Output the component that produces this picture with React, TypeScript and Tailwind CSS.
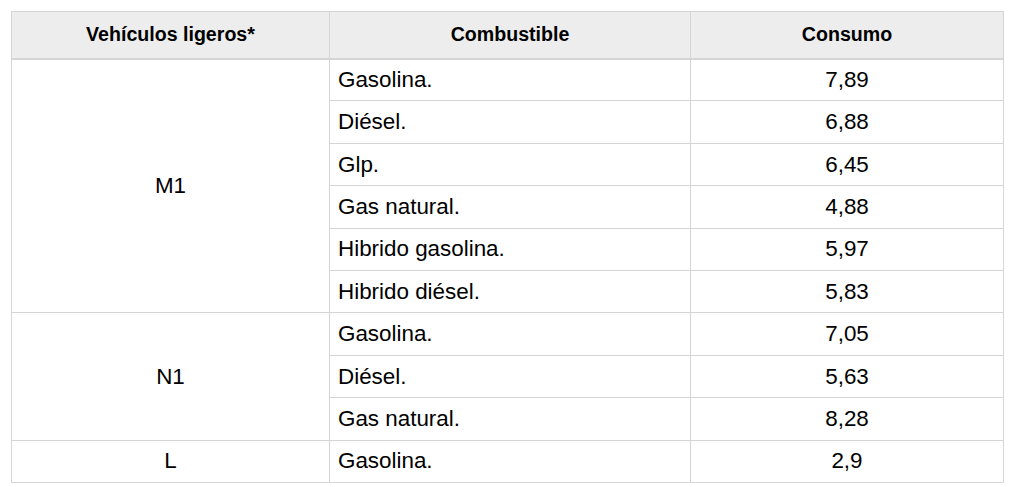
import React from 'react';

type Row = { fuel: string; value: string };
type Group = { category: string; rows: Row[] };

const groups: Group[] = [
  {
    category: 'M1',
    rows: [
      { fuel: 'Gasolina.', value: '7,89' },
      { fuel: 'Diésel.', value: '6,88' },
      { fuel: 'Glp.', value: '6,45' },
      { fuel: 'Gas natural.', value: '4,88' },
      { fuel: 'Hibrido gasolina.', value: '5,97' },
      { fuel: 'Hibrido diésel.', value: '5,83' },
    ],
  },
  {
    category: 'N1',
    rows: [
      { fuel: 'Gasolina.', value: '7,05' },
      { fuel: 'Diésel.', value: '5,63' },
      { fuel: 'Gas natural.', value: '8,28' },
    ],
  },
  {
    category: 'L',
    rows: [{ fuel: 'Gasolina.', value: '2,9' }],
  },
];

const cell = 'border border-[#d5d5d5] h-[42.4px] p-0 align-middle';

export default function App() {
  return (
    <div className="bg-white w-[1009px] h-[487px] pt-[11px] pl-[11px] font-['Liberation_Sans',Arial,sans-serif] text-black">
      <table className="table-fixed border-collapse w-[992px]">
        <colgroup>
          <col className="w-[318px]" />
          <col className="w-[361px]" />
          <col className="w-[313px]" />
        </colgroup>
        <thead>
          <tr className="bg-[#ededed]">
            {['Vehículos ligeros*', 'Combustible', 'Consumo'].map((h) => (
              <th
                key={h}
                className="border border-b-2 border-[#d5d5d5] h-[47px] p-0 text-center align-middle font-bold text-[19.6px]"
              >
                {h}
              </th>
            ))}
          </tr>
        </thead>
        <tbody className="text-[22.4px]">
          {groups.map((g) =>
            g.rows.map((r, i) => (
              <tr key={g.category + i}>
                {i === 0 && (
                  <td rowSpan={g.rows.length} className={`${cell} text-center`}>
                    {g.category}
                  </td>
                )}
                <td className={`${cell} pl-[8px] text-left`}>{r.fuel}</td>
                <td className={`${cell} text-center`}>{r.value}</td>
              </tr>
            ))
          )}
        </tbody>
      </table>
    </div>
  );
}
